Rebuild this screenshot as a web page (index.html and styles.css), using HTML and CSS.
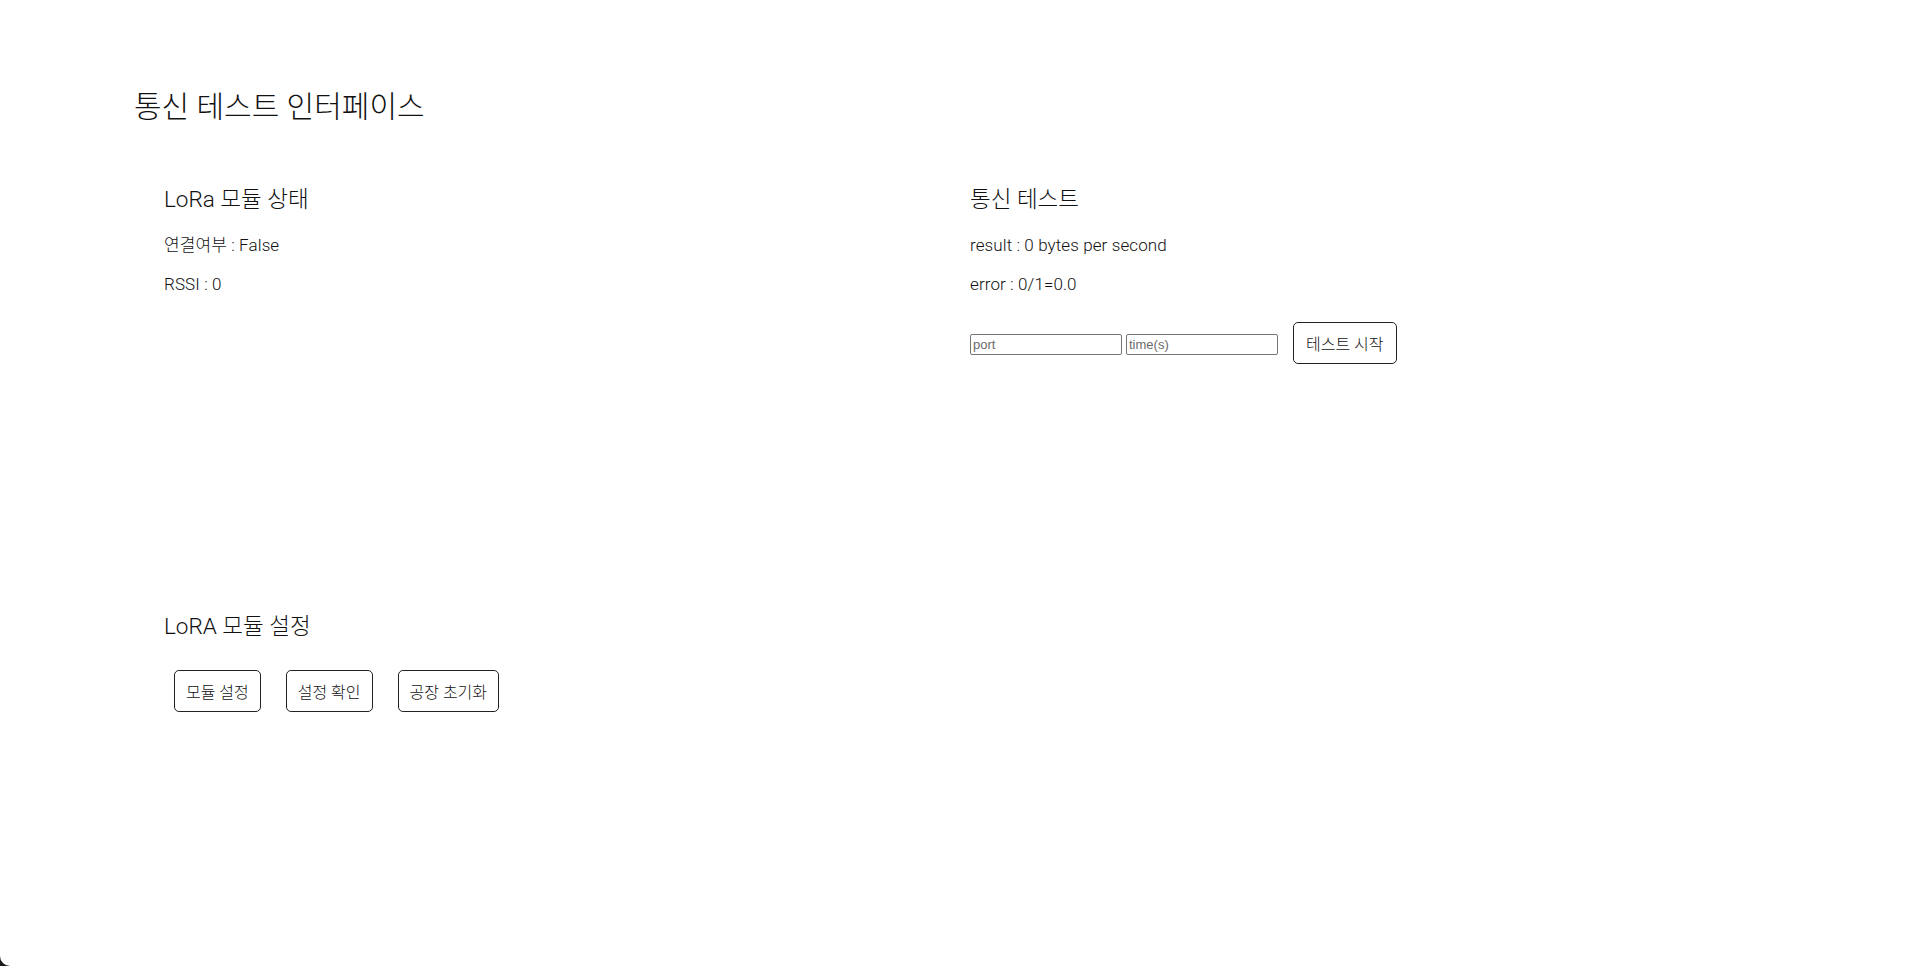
FILE: index.html
```html
<!DOCTYPE html>
<html lang="ko">
<head>
<meta charset="utf-8">
<title>통신 테스트 인터페이스</title>
<link rel="stylesheet" href="styles.css">
</head>
<body>
<div class="page">
  <h1 class="title">통신 테스트 인터페이스</h1>
  <div class="grid">
    <section class="panel panel-top">
      <h2 class="panel-title">LoRa 모듈 상태</h2>
      <p class="line">연결여부 : False</p>
      <p class="line">RSSI : 0</p>
    </section>
    <section class="panel panel-top">
      <h2 class="panel-title">통신 테스트</h2>
      <p class="line">result : 0 bytes per second</p>
      <p class="line">error : 0/1=0.0</p>
      <div class="test-row">
        <input class="field" type="text" placeholder="port">
        <input class="field" type="text" placeholder="time(s)">
        <button class="btn btn-start" type="button">테스트 시작</button>
      </div>
    </section>
    <section class="panel">
      <h2 class="panel-title">LoRA 모듈 설정</h2>
      <div class="btn-row">
        <button class="btn" type="button">모듈 설정</button>
        <button class="btn" type="button">설정 확인</button>
        <button class="btn" type="button">공장 초기화</button>
      </div>
    </section>
  </div>
</div>
</body>
</html>
```

FILE: styles.css
```css
html {
  background: #1a1a1a;
  height: 100%;
}
body {
  margin: 0;
  height: 100%;
  font-family: "Roboto", "Noto Sans CJK KR", sans-serif;
  font-weight: 300;
  color: #111;
}
.page {
  background: #fff;
  height: 100%;
  box-sizing: border-box;
  padding: 89px 134px 0;
  border-bottom-left-radius: 10px;
}
.title {
  margin: 0;
  font-size: 30px;
  line-height: 36px;
  font-weight: 300;
}
.grid {
  display: grid;
  grid-template-columns: 806px 806px;
  margin-top: 60px;
}
.panel {
  padding-left: 30px;
}
.panel-top {
  height: 427px;
}
.panel-title {
  margin: 0;
  font-size: 22.5px;
  line-height: 28px;
  font-weight: 300;
}
.line {
  margin: 21px 0 0;
  font-size: 17px;
  line-height: 22px;
  letter-spacing: 0.1px;
}
.line + .line {
  margin-top: 17px;
}
.test-row {
  display: flex;
  align-items: center;
  margin-top: 27px;
}
.field {
  width: 152px;
  height: 21px;
  box-sizing: border-box;
  margin: 3px 4px 0 0;
  padding: 1px 2px;
  border: 1px solid #767676;
  border-radius: 2px;
  font-family: "Liberation Sans", Arial, sans-serif;
  font-size: 13px;
  color: #000;
}
.field::placeholder {
  color: #6b6b6b;
}
.btn {
  box-sizing: border-box;
  height: 42px;
  padding: 0 11px;
  background: #fff;
  border: 1px solid #222;
  border-radius: 5px;
  font-family: "Roboto", "Noto Sans CJK KR", sans-serif;
  font-weight: 300;
  font-size: 16px;
  color: #111;
  cursor: pointer;
}
.btn-start {
  margin-left: 11px;
  padding: 0 12px;
}
.btn-row {
  display: flex;
  gap: 25px;
  margin-top: 30px;
  padding-left: 10px;
}
```
